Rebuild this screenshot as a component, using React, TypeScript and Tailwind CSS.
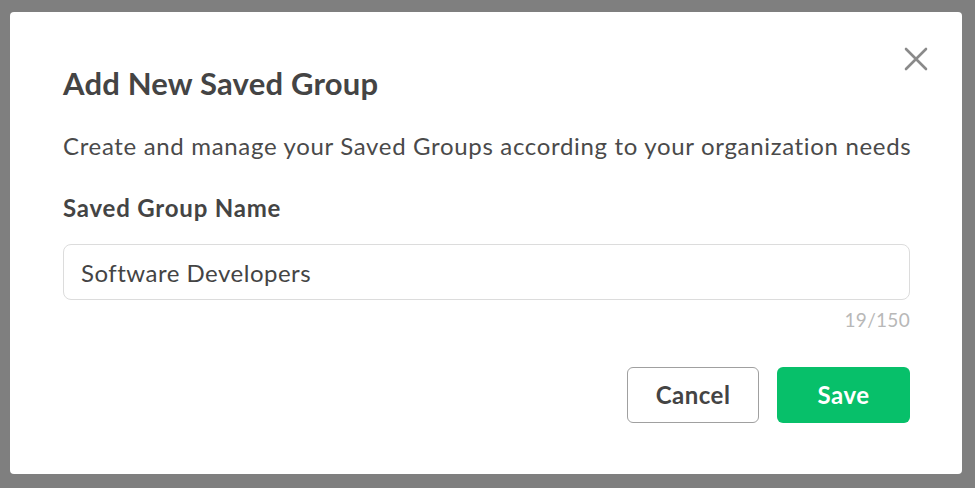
import { useState } from "react";

export default function App() {
  const [name, setName] = useState("Software Developers");

  return (
    <div className="h-[488px] w-[975px] bg-[#7f7f7f] pl-[10px] pt-[12px] font-['Lato','Noto_Sans',sans-serif]">
      <div className="relative flex h-[462px] w-[952px] flex-col rounded-[4px] bg-white pl-[53px] pr-[52px] pt-[52px]">
        <button className="absolute right-[29px] top-[30px] flex h-[34px] w-[34px] items-center justify-center text-[#8a8a8a]">
          <svg width="24" height="24" viewBox="0 0 24 24" fill="none" stroke="currentColor" strokeWidth="2.6" strokeLinecap="round">
            <path d="M2 2L22 22M22 2L2 22" />
          </svg>
        </button>

        <h2 className="text-[31px] font-bold leading-[38px] tracking-[0.2px] text-[#444]">Add New Saved Group</h2>

        <p className="mt-[28px] whitespace-nowrap text-[24px] leading-[32px] tracking-[0.67px] text-[#4a4a4a]">
          Create and manage your Saved Groups according to your organization needs
        </p>

        <label className="mt-[30px] text-[24px] font-bold leading-[32px] tracking-[0.8px] text-[#444]">
          Saved Group Name
        </label>

        <input
          value={name}
          onChange={(e) => setName(e.target.value)}
          maxLength={150}
          className="mt-[20px] h-[56px] w-full rounded-[8px] border border-[#dcdcdc] px-[17px] text-[24px] tracking-[0.5px] text-[#444] outline-none"
        />
        <div className="mt-[8px] text-right text-[19px] leading-[24px] tracking-[0.3px] text-[#b8b8b8]">
          {name.length}/150
        </div>

        <div className="mt-[35px] flex justify-end gap-[18px]">
          <button className="h-[56px] w-[132px] rounded-[6px] border border-[#a0a0a0] bg-white text-[24px] font-bold tracking-[0.5px] text-[#444]">
            Cancel
          </button>
          <button className="h-[56px] w-[133px] rounded-[6px] bg-[#07c06a] text-[24px] font-bold tracking-[0.5px] text-white">
            Save
          </button>
        </div>
      </div>
    </div>
  );
}
